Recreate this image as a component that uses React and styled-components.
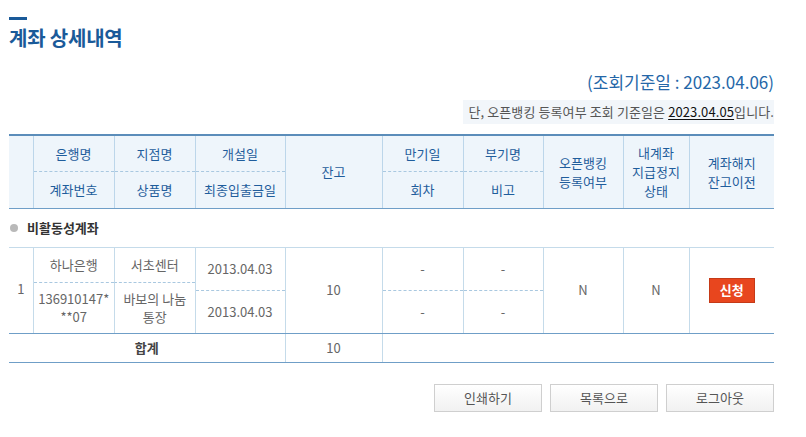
import React from "react";
import styled, { createGlobalStyle } from "styled-components";

const Global = createGlobalStyle`
  html, body { margin: 0; padding: 0; background: #fff; }
  body { font-family: "Noto Sans CJK KR", "Noto Sans", sans-serif; color: #555; }
  * { box-sizing: border-box; }
`;

const Page = styled.div`
  width: 806px;
  padding: 17px 32px 0 9px;
`;

const TitleBar = styled.div`
  width: 18px;
  height: 3px;
  background: #1a5a99;
`;

const Title = styled.h1`
  margin: 4px 0 0;
  font-size: 20px;
  line-height: 27px;
  font-weight: 700;
  color: #1a5a99;
  letter-spacing: -0.2px;
`;

const BaseDate = styled.div`
  margin-top: 20px;
  text-align: right;
  font-size: 17px;
  line-height: 22px;
  color: #2567a8;
`;

const NoteRow = styled.div`
  display: flex;
  justify-content: flex-end;
  margin-top: 7px;
`;

const Note = styled.div`
  background: #f2f6fa;
  padding: 3px 0 3px 5px;
  font-size: 13px;
  line-height: 18px;
  color: #555;
  letter-spacing: 0.1px;
  u { color: #111; text-underline-offset: 2px; }
`;

const Table = styled.table`
  margin-top: 10px;
  width: 765px;
  border-collapse: collapse;
  table-layout: fixed;
  border-top: 2px solid #5b8dba;
`;

const Th = styled.th`
  background: #eef5fb;
  color: #1f5d9c;
  font-size: 13px;
  font-weight: 400;
  line-height: 19px;
  height: ${(p) => (p.$tall ? "73px" : "36px")};
  padding: 0;
  text-align: center;
  vertical-align: middle;
  border-left: 1px solid #bcd6ea;
  border-bottom: ${(p) => (p.$dash ? "1px dashed #a9c8e0" : "1px solid #6f9ec7")};
  &:first-child { border-left: none; }
`;

const Th2 = styled(Th)`
  &:first-child { border-left: 1px solid #bcd6ea; }
`;

const SectionCell = styled.td`
  height: 39px;
  padding: 0 0 0 1px;
  border-bottom: 1px solid #c5dbea;
  font-size: 13px;
  font-weight: 700;
  color: #333;
  vertical-align: middle;
`;

const Bullet = styled.span`
  display: inline-block;
  width: 8px;
  height: 8px;
  border-radius: 50%;
  background: #b9b9b9;
  margin-right: 9px;
  vertical-align: 1px;
`;

const Td = styled.td`
  padding: 0;
  font-size: 13px;
  line-height: 18px;
  color: #666;
  text-align: center;
  vertical-align: middle;
  border-left: 1px solid #c5dbea;
  border-bottom: 1px solid #6f9ec7;
  &:first-child { border-left: none; }
`;

const NoCell = styled(Td)`
  padding-bottom: 2px;
`;

const PairGrid = styled.div`
  display: grid;
  grid-template-columns: 1fr 1fr;
  height: 85px;
  grid-template-rows: 34px 1fr;
`;

const PairCell = styled.div`
  display: flex;
  align-items: center;
  justify-content: center;
  padding: 0 2px;
  border-left: ${(p) => (p.$right ? "1px solid #c5dbea" : "none")};
  border-top: ${(p) => (p.$bottom ? "1px dashed #a9c8e0" : "none")};
`;

const Lines = styled.span`
  display: block;
  line-height: 18px;
`;

const Halves = styled.div`
  display: flex;
  flex-direction: column;
  height: 85px;
`;

const Half = styled.div`
  flex: 1;
  display: flex;
  align-items: center;
  justify-content: center;
  border-top: ${(p) => (p.$bottom ? "1px dashed #a9c8e0" : "none")};
`;

const ApplyButton = styled.button`
  width: 46px;
  height: 25px;
  padding: 0;
  background: #e8461e;
  border: 1px solid #c53a17;
  color: #fff;
  font-family: inherit;
  font-size: 13px;
  font-weight: 700;
  line-height: 22px;
  cursor: pointer;
`;

const TotalTd = styled(Td)`
  height: 29px;
  font-weight: ${(p) => (p.$bold ? 700 : 400)};
  color: ${(p) => (p.$bold ? "#444" : "#666")};
`;

const Buttons = styled.div`
  display: flex;
  justify-content: flex-end;
  gap: 8px;
  margin-top: 21px;
`;

const Button = styled.button`
  width: 108px;
  height: 28px;
  padding: 0;
  border: 1px solid #cfcfcf;
  background: linear-gradient(#ffffff, #f1f1f1);
  color: #555;
  font-family: inherit;
  font-size: 13px;
  cursor: pointer;
`;

const widths = [24, 81, 81, 90, 97, 81, 80, 80, 66, 85];

export default function App() {
  return (
    <>
      <Global />
      <Page>
        <TitleBar />
        <Title>계좌 상세내역</Title>
        <BaseDate>(조회기준일 : 2023.04.06)</BaseDate>
        <NoteRow>
          <Note>
            단, 오픈뱅킹 등록여부 조회 기준일은 <u>2023.04.05</u>입니다.
          </Note>
        </NoteRow>
        <Table>
          <colgroup>
            {widths.map((w, i) => (
              <col key={i} style={{ width: w }} />
            ))}
          </colgroup>
          <thead>
            <tr>
              <Th rowSpan={2} $tall></Th>
              <Th $dash>은행명</Th>
              <Th $dash>지점명</Th>
              <Th $dash>개설일</Th>
              <Th rowSpan={2} $tall>잔고</Th>
              <Th $dash>만기일</Th>
              <Th $dash>부기명</Th>
              <Th rowSpan={2} $tall>
                오픈뱅킹
                <br />
                등록여부
              </Th>
              <Th rowSpan={2} $tall>
                내계좌
                <br />
                지급정지
                <br />
                상태
              </Th>
              <Th rowSpan={2} $tall>
                계좌해지
                <br />
                잔고이전
              </Th>
            </tr>
            <tr>
              <Th2>계좌번호</Th2>
              <Th2>상품명</Th2>
              <Th2>최종입출금일</Th2>
              <Th2>회차</Th2>
              <Th2>비고</Th2>
            </tr>
          </thead>
          <tbody>
            <tr>
              <SectionCell colSpan={10}>
                <Bullet />
                비활동성계좌
              </SectionCell>
            </tr>
            <tr>
              <NoCell>1</NoCell>
              <Td colSpan={2}>
                <PairGrid>
                  <PairCell>하나은행</PairCell>
                  <PairCell $right>서초센터</PairCell>
                  <PairCell $bottom>
                    <div>
                      <Lines>136910147*</Lines>
                      <Lines>**07</Lines>
                    </div>
                  </PairCell>
                  <PairCell $bottom $right>
                    <div>
                      <Lines>바보의 나눔</Lines>
                      <Lines>통장</Lines>
                    </div>
                  </PairCell>
                </PairGrid>
              </Td>
              <Td>
                <Halves>
                  <Half>2013.04.03</Half>
                  <Half $bottom>2013.04.03</Half>
                </Halves>
              </Td>
              <Td>10</Td>
              <Td>
                <Halves>
                  <Half>-</Half>
                  <Half $bottom>-</Half>
                </Halves>
              </Td>
              <Td>
                <Halves>
                  <Half>-</Half>
                  <Half $bottom>-</Half>
                </Halves>
              </Td>
              <Td>N</Td>
              <Td>N</Td>
              <Td>
                <ApplyButton>신청</ApplyButton>
              </Td>
            </tr>
            <tr>
              <TotalTd colSpan={4} $bold>
                합계
              </TotalTd>
              <TotalTd>10</TotalTd>
              <TotalTd colSpan={5}></TotalTd>
            </tr>
          </tbody>
        </Table>
        <Buttons>
          <Button>인쇄하기</Button>
          <Button>목록으로</Button>
          <Button>로그아웃</Button>
        </Buttons>
      </Page>
    </>
  );
}
